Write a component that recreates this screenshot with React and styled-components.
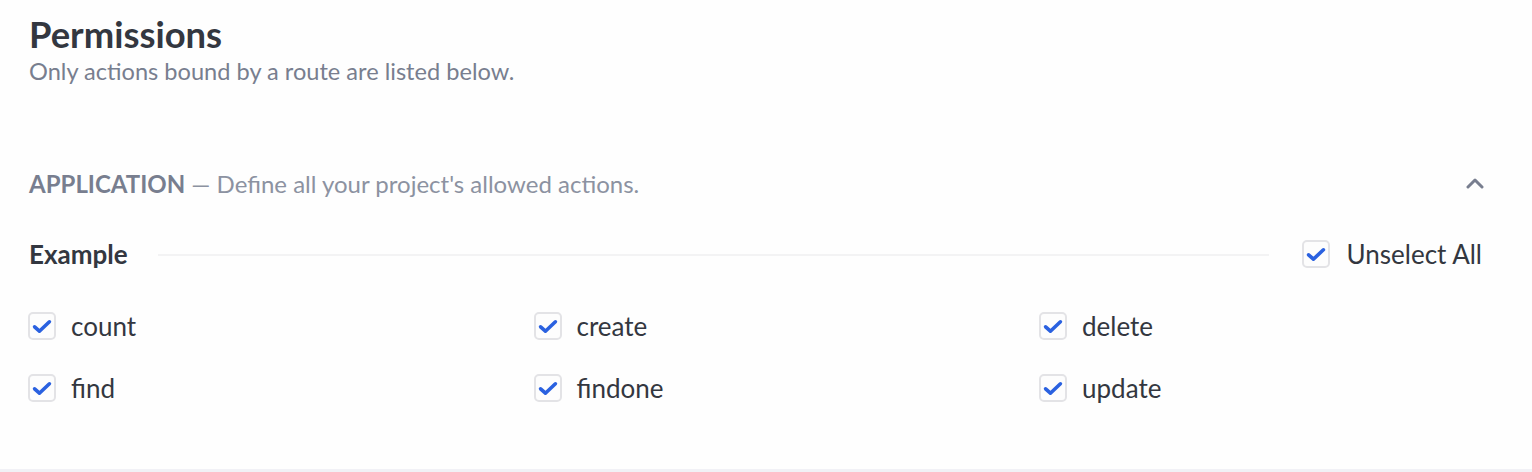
import React from 'react';
import styled, { createGlobalStyle } from 'styled-components';

const actions = ['count', 'create', 'delete', 'find', 'findone', 'update'];

const CheckIcon = () => (
  <svg width="20" height="15" viewBox="0 0 20 15" fill="none">
    <path d="M2.6 7.8l4.8 4.4L17.4 2.8" stroke="#2a61e0" strokeWidth="3.6" strokeLinecap="round" strokeLinejoin="round" />
  </svg>
);

const ChevronUp = () => (
  <svg width="18" height="11" viewBox="0 0 18 11" fill="none">
    <path d="M2 9l7-7 7 7" stroke="#787e8f" strokeWidth="3" strokeLinecap="round" strokeLinejoin="round" />
  </svg>
);

const Checkbox = ({ label, big }) => (
  <CheckLabel big={big}>
    <Box>
      <CheckIcon />
    </Box>
    <span>{label}</span>
  </CheckLabel>
);

const App = () => (
  <Page>
    <GlobalStyle />
    <Header>
      <Title>Permissions</Title>
      <Subtitle>Only actions bound by a route are listed below.</Subtitle>
    </Header>
    <Section>
      <SectionHead>
        <SectionTitle>
          <strong>APPLICATION</strong> — Define all your project's allowed actions.
        </SectionTitle>
        <ChevronUp />
      </SectionHead>
      <GroupHead>
        <GroupName>Example</GroupName>
        <Divider />
        <Checkbox label="Unselect All" big />
      </GroupHead>
      <Grid>
        {actions.map((a) => (
          <Checkbox key={a} label={a} />
        ))}
      </Grid>
    </Section>
  </Page>
);

/* styled-components */
const GlobalStyle = createGlobalStyle`
  body {
    margin: 0;
    background: #fefefe;
    font-family: Lato, "Open Sans", sans-serif;
  }
`;

const Page = styled.div`
  width: 1532px;
  height: 472px;
  box-sizing: border-box;
  border-bottom: 3px solid #f1f1f6;
`;

const Header = styled.div`
  padding: 12px 29px 0;
`;

const Title = styled.h1`
  margin: 0;
  font-size: 36.4px;
  font-weight: 700;
  line-height: 44px;
  color: #333740;
`;

const Subtitle = styled.p`
  margin: 0;
  font-size: 23.6px;
  line-height: 30px;
  color: #787e8f;
`;

const Section = styled.div`
  padding: 0 28px;
`;

const SectionHead = styled.div`
  display: flex;
  align-items: center;
  justify-content: space-between;
  height: 40px;
  margin-top: 77px;
  padding-right: 20px;
`;

const SectionTitle = styled.div`
  font-size: 24px;
  color: #8c92a1;
  padding-left: 1px;

  strong {
    font-weight: 700;
    color: #787e8f;
  }
`;

const GroupHead = styled.div`
  display: flex;
  align-items: center;
  margin-top: 36px;
  height: 30px;
`;

const GroupName = styled.div`
  font-size: 26px;
  font-weight: 700;
  color: #333740;
  padding-left: 1px;
`;

const Divider = styled.div`
  flex: 1;
  height: 2px;
  background: #f3f3f4;
  margin: 2px 33px 0 30px;
`;

const Grid = styled.div`
  display: grid;
  grid-template-columns: repeat(3, 505.5px);
  row-gap: 34px;
  margin-top: 43px;
`;

const CheckLabel = styled.label`
  display: flex;
  align-items: center;
  gap: ${(p) => (p.big ? '17px' : '15px')};
  font-size: 26px;
  color: #333740;
  height: 28px;
  margin-right: ${(p) => (p.big ? '22px' : '0')};
`;

const Box = styled.span`
  display: flex;
  align-items: center;
  justify-content: center;
  width: 28px;
  height: 28px;
  box-sizing: border-box;
  border: 2px solid #e3e3e6;
  border-radius: 5px;
  background: #fdfdfd;
  flex-shrink: 0;
`;

export default App;
